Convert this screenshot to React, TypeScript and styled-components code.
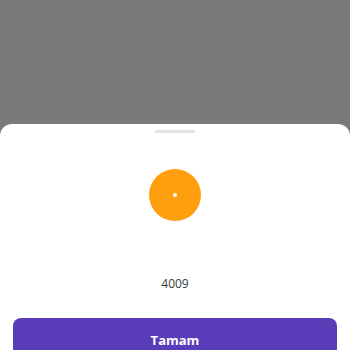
import styled, { createGlobalStyle } from 'styled-components';

const GlobalStyle = createGlobalStyle`
  html, body {
    margin: 0;
    padding: 0;
    height: 100%;
    overflow: hidden;
  }
  #root {
    height: 100%;
  }
  body {
    font-family: "Open Sans", "Noto Sans", sans-serif;
  }
`;

const Overlay = styled.div`
  height: 100vh;
  background: #7a7a7a;
  display: flex;
  flex-direction: column;
  justify-content: flex-end;
  overflow: hidden;
`;

const Sheet = styled.div`
  background: #ffffff;
  border-radius: 12px 12px 0 0;
  height: 226px;
  flex-shrink: 0;
  padding: 6px 13px 0;
  display: flex;
  flex-direction: column;
  align-items: center;
  box-sizing: border-box;
  overflow: hidden;

  & > * {
    flex-shrink: 0;
  }
`;

const Handle = styled.div`
  width: 40px;
  height: 3px;
  border-radius: 2px;
  background: #e2e2e2;
`;

const Marker = styled.div`
  margin-top: 36px;
  width: 52px;
  height: 52px;
  border-radius: 50%;
  background: #ff9f0e;
  display: flex;
  align-items: center;
  justify-content: center;
`;

const Dot = styled.div`
  width: 4px;
  height: 4px;
  border-radius: 50%;
  background: #ffffff;
`;

const Code = styled.div`
  margin-top: 54px;
  font-size: 12px;
  color: #3a3a3a;
  line-height: 18px;
`;

const ConfirmButton = styled.button`
  margin-top: 25px;
  width: 100%;
  height: 44px;
  border: none;
  border-radius: 8px;
  background: #5b3cb8;
  color: #ffffff;
  font-family: "Open Sans", "Noto Sans", sans-serif;
  font-size: 13px;
  font-weight: 700;
  display: flex;
  justify-content: center;
  align-items: flex-start;
  padding: 13px 0 0;
`;

export default function App() {
  return (
    <>
      <GlobalStyle />
      <Overlay>
        <Sheet>
          <Handle />
          <Marker>
            <Dot />
          </Marker>
          <Code>4009</Code>
          <ConfirmButton>Tamam</ConfirmButton>
        </Sheet>
      </Overlay>
    </>
  );
}
